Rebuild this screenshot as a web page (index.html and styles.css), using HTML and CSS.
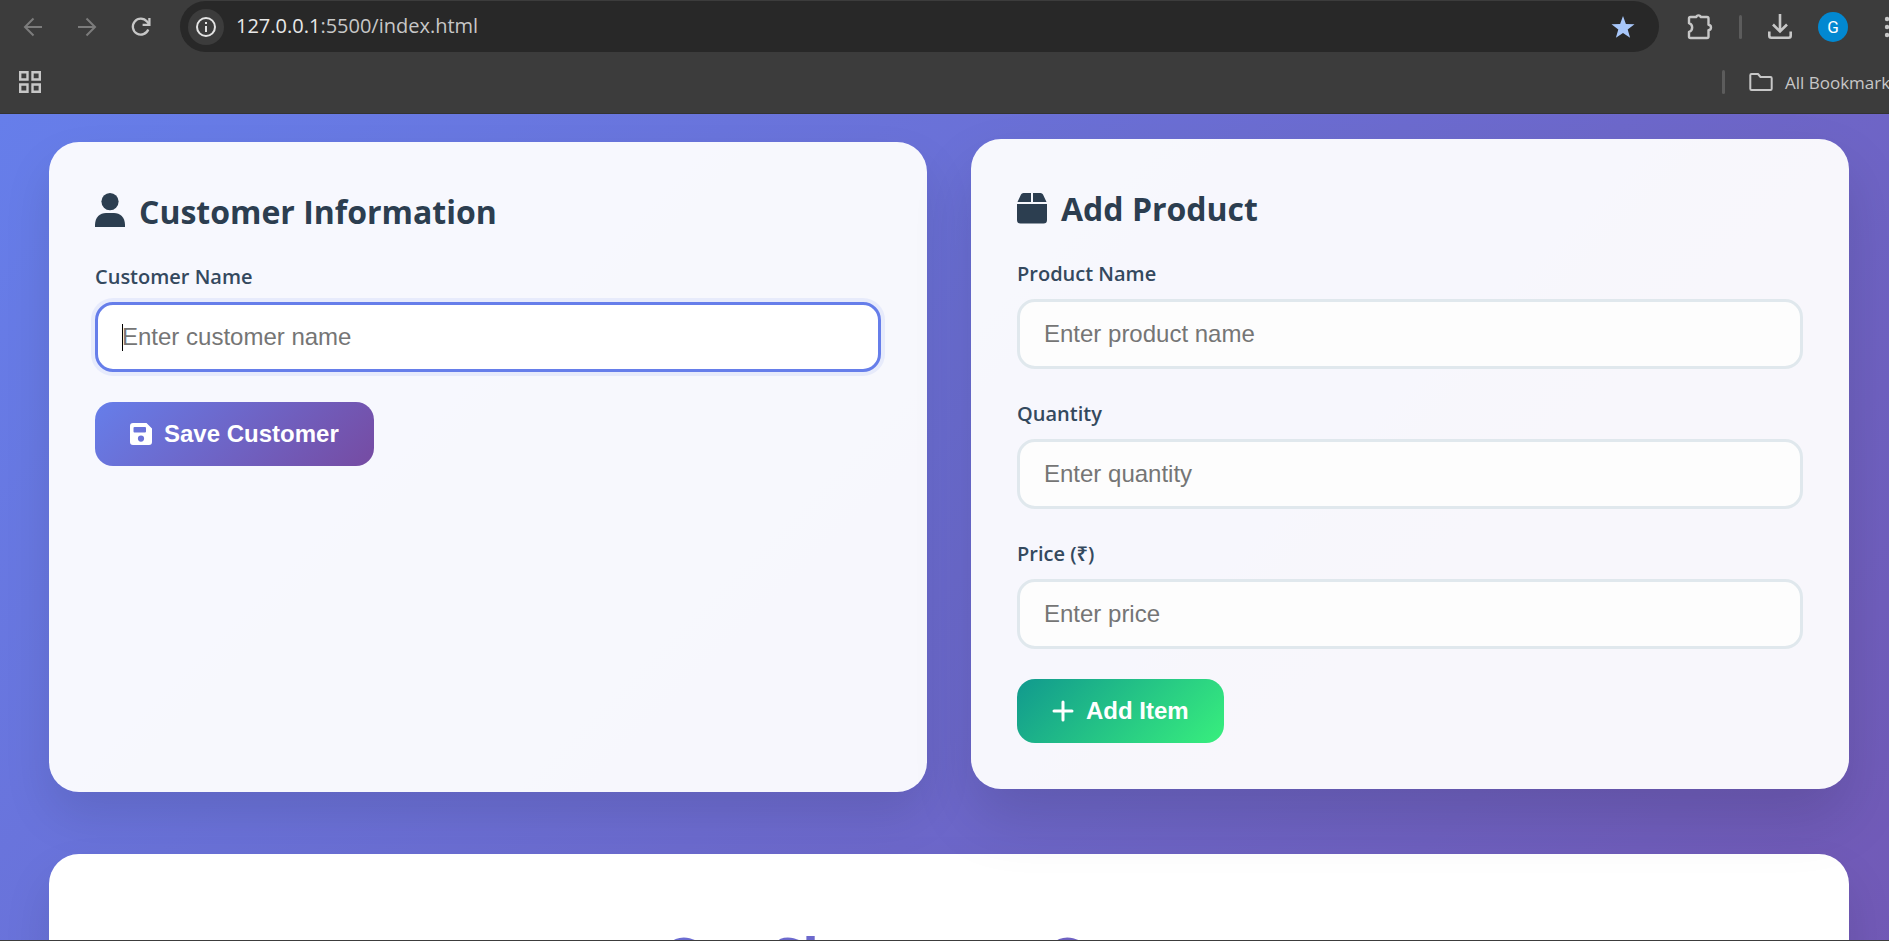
FILE: index.html
```html
<!DOCTYPE html>
<html lang="en">
<head>
<meta charset="utf-8">
<title>Store Billing</title>
<link rel="stylesheet" href="styles.css">
</head>
<body>
<header class="browser">
  <div class="toolbar">
    <nav class="nav" aria-label="Browser">
      <button class="icon-btn dim" aria-label="Back"><svg width="20" height="20" viewBox="0 0 20 20" fill="none" stroke="currentColor" stroke-width="2"><path d="M19 10H2.500M10.500 1.500 2 10l8.500 8.500"/></svg></button>
      <button class="icon-btn dim" aria-label="Forward"><svg width="20" height="20" viewBox="0 0 20 20" fill="none" stroke="currentColor" stroke-width="2"><path d="M1 10h16.500M9.500 1.500 18 10l-8.500 8.500"/></svg></button>
      <button class="icon-btn" aria-label="Reload"><svg width="20" height="20" viewBox="0 0 20 20" fill="none" stroke="currentColor" stroke-width="2.300"><path d="M17.300 12.500A8 8 0 1 1 16 4.500L18 7"/><path d="M18.400 1v6.800h-6.800"/></svg></button>
    </nav>
    <div class="address">
      <button class="site-info" aria-label="Site information"><svg width="20" height="20" viewBox="0 0 20 20" fill="none" stroke="currentColor" stroke-width="2"><circle cx="10" cy="10" r="9"/><path d="M10 9v6M10 5v2"/></svg></button>
      <span class="url"><span class="host">127.0.0.1</span>:5500/index.html</span>
      <button class="star" aria-label="Edit bookmark"><svg width="24" height="24" viewBox="0 0 24 24" fill="currentColor"><path d="m12 1 2.900 7.900 8.600.3-6.800 5.300 2.400 8.300L12 18l-7.100 4.800 2.400-8.300L.5 9.200l8.600-.3z"/></svg></button>
    </div>
    <div class="tools">
      <button class="icon-btn" aria-label="Extensions"><svg width="26" height="26" viewBox="0 0 26 26" fill="none" stroke="currentColor" stroke-width="2.400" stroke-linejoin="round"><path d="M3.500 3h5.800q.3-1.600 2.200-1.600T13.700 3h6.300q1.500 0 1.500 1.500v6.300q2.500.3 2.500 2.700t-2.500 2.700v6.300q0 1.500-1.500 1.500H3.500Q2 24 2 22.500v-4.700a4.500 4.500 0 0 0 0-8.600V4.500Q2 3 3.500 3z"/></svg></button>
      <span class="divider"></span>
      <button class="icon-btn" aria-label="Downloads"><svg width="24" height="26" viewBox="0 0 24 26" fill="none" stroke="currentColor" stroke-width="2.600"><path d="M12 0v17M5 10.500l7 7 7-7M1.300 17.500v4.200q0 2 2 2h17.400q2 0 2-2v-4.200"/></svg></button>
      <button class="avatar" aria-label="Profile">G</button>
      <button class="icon-btn" aria-label="Menu"><svg width="6" height="22" viewBox="0 0 6 22" fill="currentColor"><circle cx="3" cy="3" r="2.200"/><circle cx="3" cy="11" r="2.200"/><circle cx="3" cy="19" r="2.200"/></svg></button>
    </div>
  </div>
  <div class="bookmarks">
    <button class="icon-btn" aria-label="Apps"><svg width="22" height="22" viewBox="0 0 22 22" fill="none" stroke="currentColor" stroke-width="2.400"><path d="M1.200 1.200h7.300v7.300H1.200zM13.500 1.200h7.300v7.300h-7.300zM1.200 13.500h7.300v7.300H1.200zM13.500 13.500h7.300v7.300h-7.300z"/></svg></button>
    <span class="divider"></span>
    <button class="all"><svg width="24" height="20" viewBox="0 0 24 20" fill="none" stroke="currentColor" stroke-width="2" stroke-linejoin="round"><path d="M2.500 2H9l2.500 3H21.500q1.200 0 1.200 1.200v10.600q0 1.200-1.200 1.200h-19q-1.200 0-1.200-1.200V3.200Q1.300 2 2.500 2z"/></svg>All Bookmarks</button>
  </div>
</header>
<main class="page">
  <div class="grid">
    <section class="card">
      <h2><svg width="30" height="34" viewBox="0 0 30 34" fill="currentColor"><circle cx="15" cy="8.600" r="8.600"/><path d="M0 34v-2C0 24 5 20 11 20h8c6 0 11 4 11 12v2z"/></svg>Customer Information</h2>
      <form class="form">
        <div class="field"><label for="customer">Customer Name</label><input id="customer" type="text" placeholder="Enter customer name" autofocus></div>
        <button type="button" class="btn save"><svg width="22" height="22" viewBox="0 0 22 22" fill="currentColor" fill-rule="evenodd"><path d="M3 0h13.500L22 5.500V19a3 3 0 0 1-3 3H3a3 3 0 0 1-3-3V3a3 3 0 0 1 3-3zm1.500 4A1 1 0 0 0 3.500 5v3.500a1 1 0 0 0 1 1H15a1 1 0 0 0 1-1V5a1 1 0 0 0-1-1zM11 12.500a3.100 3.100 0 1 0 0 6.200 3.100 3.100 0 0 0 0-6.200z"/></svg>Save Customer</button>
      </form>
    </section>
    <section class="card raised">
      <h2><svg width="30" height="31" viewBox="0 0 30 31" fill="currentColor"><path d="M6.500 0H14v9H.5l3.500-7.500Q4.700 0 6.500 0zM16 0h7.500q1.800 0 2.500 1.500L29.500 9H16zM0 11h30v16q0 3.500-3.500 3.500h-23Q0 30.500 0 27z"/></svg>Add Product</h2>
      <form class="form">
        <div class="field"><label for="product">Product Name</label><input id="product" type="text" placeholder="Enter product name"></div>
        <div class="field"><label for="qty">Quantity</label><input id="qty" type="text" inputmode="numeric" placeholder="Enter quantity"></div>
        <div class="field"><label for="price">Price (₹)</label><input id="price" type="text" inputmode="decimal" placeholder="Enter price"></div>
        <button type="button" class="btn add"><svg width="22" height="22" viewBox="0 0 22 22" fill="none" stroke="currentColor" stroke-width="3" stroke-linecap="round"><path d="M11 2v18M2 11h18"/></svg>Add Item</button>
      </form>
    </section>
  </div>
  <section class="card store"><h1>Car Shoppers Corner</h1></section>
</main>
</body>
</html>
```
FILE: styles.css
```css
* { box-sizing: border-box; }
body {
  margin: 0;
  height: 100vh;
  overflow: hidden;
  display: flex;
  flex-direction: column;
  font-family: "Open Sans", "Noto Sans", sans-serif;
  border-bottom: 1px solid #3c3c3c;
}
button { border: 0; padding: 0; background: none; font: inherit; color: inherit; }
svg { display: block; flex: none; }

.browser {
  flex: none;
  height: 114px;
  overflow: hidden;
  background: #3c3c3c;
  border-bottom: 1px solid #333;
  color: #c7c7c7;
}
.toolbar { display: flex; align-items: center; height: 53px; padding-left: 23px; }
.nav { display: flex; gap: 34px; width: 157px; }
.dim { color: #7c7c7c; }
.address {
  flex: 1;
  display: flex;
  align-items: center;
  height: 51px;
  padding: 0 24px 0 8px;
  border-radius: 26px;
  background: #282828;
}
.site-info {
  display: grid;
  place-items: center;
  width: 36px;
  height: 36px;
  border-radius: 50%;
  background: #3c3c3c;
  color: #e3e3e3;
}
.url { flex: 1; margin-left: 12px; font-size: 20px; line-height: 26px; padding-bottom: 2px; color: #c7c7c7; }
.host { color: #e8e8e8; }
.star { color: #a8c7fa; }
.tools { display: flex; flex: none; align-items: center; gap: 26px; width: 230px; padding-left: 28px; }
.divider { flex: none; width: 3px; height: 24px; border-radius: 2px; background: #5c5c5c; }
.avatar {
  flex: none;
  width: 30px;
  height: 30px;
  border-radius: 50%;
  background: #0288d1;
  color: #fff;
  font: 17px Roboto, sans-serif;
}
.tools .icon-btn:last-child { margin-left: 10px; }
.bookmarks { display: flex; align-items: center; height: 58px; padding-left: 19px; }
.bookmarks .divider { margin-left: auto; margin-right: 24px; }
.all { display: flex; flex: none; align-items: center; gap: 12px; width: 140px; white-space: nowrap; font-size: 17px; }

.page {
  flex: 1;
  min-height: 0;
  overflow: hidden;
  padding: 28px 40px 0 49px;
  background: linear-gradient(135deg, #667eea 0%, #764ba2 100%) 0 0 / 100% 1900px;
}
.grid { position: relative; z-index: 1; display: grid; grid-template-columns: 1fr 1fr; gap: 44px; }
.card {
  padding: 46px;
  border-radius: 30px;
  background: rgba(255, 255, 255, 0.95);
  box-shadow: 0 24px 48px rgba(0, 0, 0, 0.1);
}
.raised { transform: translateY(-3px); box-shadow: 0 30px 60px rgba(0, 0, 0, 0.13); }
.card h2 {
  display: flex;
  align-items: flex-end;
  gap: 14px;
  margin: 0 0 26px;
  font-size: 32px;
  line-height: 48px;
  color: #2c3e50;
}
.card h2 svg { margin-bottom: 9px; }
.field { margin-bottom: 30px; }
.field label { display: block; margin-bottom: 10px; font-size: 20px; font-weight: 600; line-height: 30px; color: #34495e; }
.field input {
  display: block;
  width: 100%;
  height: 70px;
  padding: 0 24px;
  border: 3px solid #e0e8ed;
  border-radius: 18px;
  outline: 0;
  background: #fdfdfd;
  font: 24px "Liberation Sans", Arial, sans-serif;
}
.field input::placeholder { color: #757575; }
.field input:focus {
  border-color: #667eea;
  background: linear-gradient(#000, #000) 24px center / 1px 27px no-repeat #fff;
  caret-color: transparent;
  box-shadow: 0 0 0 4px rgba(102, 126, 234, 0.1);
}
.btn {
  display: inline-flex;
  align-items: center;
  gap: 12px;
  height: 64px;
  padding: 0 35px;
  border-radius: 18px;
  color: #fff;
  font: bold 24px "Liberation Sans", Arial, sans-serif;
}
.save { background: linear-gradient(135deg, #667eea, #764ba2); }
.add { background: linear-gradient(135deg, #11998e, #38ef7d); }
.store { margin-top: 62px; background: #fff; text-align: center; }
.store h1 {
  margin: 0;
  font-size: 56px;
  line-height: 112px;
  color: transparent;
  background: linear-gradient(135deg, #667eea, #764ba2);
  background-clip: text;
}
```
